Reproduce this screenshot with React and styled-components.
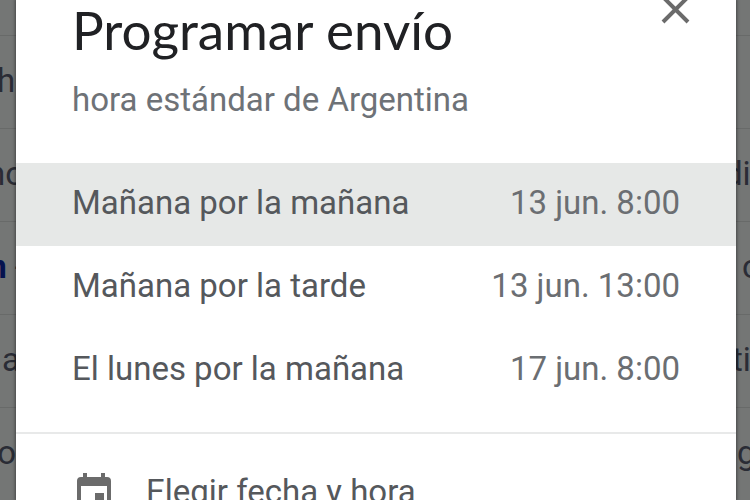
import React from "react";
import styled, { createGlobalStyle } from "styled-components";

const GlobalStyle = createGlobalStyle`
  *,
  *::before,
  *::after {
    box-sizing: border-box;
  }

  body {
    margin: 0;
    background: #747675;
    font-family: Roboto, "Liberation Sans", sans-serif;
  }
`;

const Screen = styled.div`
  position: relative;
  height: 100vh;
  overflow: hidden;
`;

// the list is scrolled part of the way through its first mail
const Inbox = styled.ul`
  margin: -57px 0 0;
  padding: 0;
  list-style: none;
`;

const Mail = styled.li`
  display: flex;
  justify-content: space-between;
  align-items: center;
  height: 93px;
  padding-bottom: 2px;
  border-bottom: 1px solid #686a69;
  color: #2a2c35;
  font-size: 33px;
  line-height: 40px;
`;

const Snippet = styled.span`
  display: flex;
  justify-content: flex-end;
  width: ${props => props.$width}px;
  overflow: hidden;
  white-space: pre;
`;

const SnippetEnd = styled(Snippet)`
  justify-content: flex-start;
`;

const Unread = styled.b`
  color: #05124f;
`;

const Dialog = styled.section`
  position: absolute;
  top: 0;
  right: 14px;
  bottom: 0;
  left: 16px;
  overflow: hidden;
  background: #fff;
  box-shadow: 0 0 3px 1px rgba(0, 0, 0, 0.4);
`;

const Header = styled.header`
  display: flex;
  justify-content: space-between;
  align-items: flex-start;
  padding: 0 44px 0 56px;
`;

const Title = styled.h1`
  margin: 0;
  color: #202124;
  font-family: Lato, "Open Sans", sans-serif;
  font-size: 53px;
  font-weight: 400;
  line-height: 60px;
`;

const CloseButton = styled.button`
  display: flex;
  padding: 0;
  border: 0;
  background: none;
  color: #6b6b6b;
  cursor: pointer;
`;

const TimeZone = styled.p`
  margin: 20px 56px 43px;
  color: #6e7277;
  font-size: 33px;
  line-height: 40px;
`;

const Options = styled.div`
  padding-bottom: 20px;
  border-bottom: 2px solid #e8e9e9;
`;

const Option = styled.button`
  display: flex;
  justify-content: space-between;
  align-items: center;
  width: 100%;
  height: 83px;
  padding: 0 56px 3px;
  border: 0;
  background: ${props => (props.$active ? "#e6e8e7" : "#fff")};
  color: #55585c;
  font: inherit;
  font-size: 33px;
  line-height: 40px;
  cursor: pointer;
`;

const OptionTime = styled.span`
  color: #6b6e72;
`;

const PickButton = styled(Option)`
  justify-content: flex-start;
  align-items: flex-start;
  gap: 32px;
  height: auto;
  padding-top: 38px;
`;

const mails = [
  { start: "o", end: "o", width: 16, endWidth: 8 },
  { start: "ho", end: "", width: 34, endWidth: 8 },
  { start: "no", end: "di", width: 24, endWidth: 26 },
  { unread: "n", start: " -", end: "o", width: 24, endWidth: 8 },
  { start: "a", end: "ti", width: 20, endWidth: 18 },
  { start: "o", end: "g", width: 16, endWidth: 13 }
];

const options = [
  { label: "Mañana por la mañana", time: "13 jun. 8:00" },
  { label: "Mañana por la tarde", time: "13 jun. 13:00" },
  { label: "El lunes por la mañana", time: "17 jun. 8:00" }
];

const CloseIcon = () => (
  <svg width="32" height="26" viewBox="0 0 32 26" aria-hidden="true">
    <path d="M3 -3 L28 22 M28 -3 L3 22" stroke="currentColor" strokeWidth="4" />
  </svg>
);

const CalendarIcon = () => (
  <svg width="42" height="44" viewBox="0 0 42 44" fill="#6b6b6b" aria-hidden="true">
    <path d="M11 1h4v4h14V1h4v4h2a4 4 0 0 1 4 4v30a4 4 0 0 1-4 4H9a4 4 0 0 1-4-4V9a4 4 0 0 1 4-4h2zM9 14v25h26V14z" />
    <path d="M23 21h9v10h-9z" />
  </svg>
);

const MailRow = ({ mail }) => (
  <Mail>
    <Snippet $width={mail.width}>
      {mail.unread && <Unread>{mail.unread}</Unread>}
      {mail.start}
    </Snippet>
    <SnippetEnd $width={mail.endWidth}>{mail.end}</SnippetEnd>
  </Mail>
);

const App = () => (
  <Screen>
    <GlobalStyle />
    <Inbox>
      {mails.map((mail, i) => (
        <MailRow key={i} mail={mail} />
      ))}
    </Inbox>
    <Dialog role="dialog" aria-labelledby="schedule-title">
      <Header>
        <Title id="schedule-title">Programar envío</Title>
        <CloseButton type="button" aria-label="Cerrar">
          <CloseIcon />
        </CloseButton>
      </Header>
      <TimeZone>hora estándar de Argentina</TimeZone>
      <Options>
        {options.map((option, i) => (
          <Option key={option.label} type="button" $active={i === 0}>
            <span>{option.label}</span>
            <OptionTime>{option.time}</OptionTime>
          </Option>
        ))}
      </Options>
      <PickButton type="button">
        <CalendarIcon />
        <span>Elegir fecha y hora</span>
      </PickButton>
    </Dialog>
  </Screen>
);

export default App;
